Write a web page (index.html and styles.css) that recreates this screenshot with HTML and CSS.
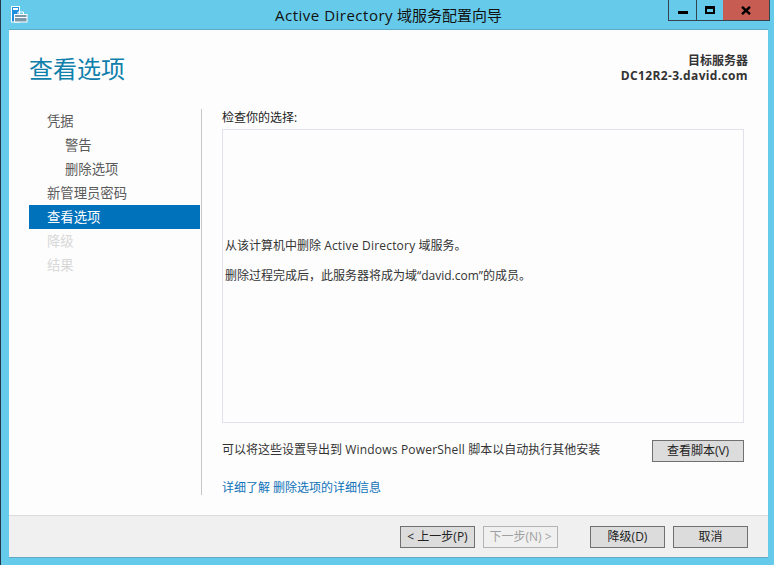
FILE: index.html
```html
<!DOCTYPE html>
<html lang="zh-CN">
<head>
<meta charset="utf-8">
<title>Active Directory 域服务配置向导</title>
<link rel="stylesheet" href="styles.css">
</head>
<body>
<div class="window">
  <header class="titlebar">
    <svg class="app-icon" width="17" height="17" viewBox="0 0 17 17">
      <rect x="0.5" y="0.5" width="8" height="15.5" fill="#1d8fe0" stroke="#fff"/>
      <rect x="2" y="2" width="5" height="2" fill="#fff"/>
      <rect x="3.5" y="8.5" width="12.5" height="7.5" fill="#7b98aa" stroke="#fff"/>
      <path d="M7 8V6h5.5v2" fill="none" stroke="#fff"/>
      <rect x="4" y="11" width="12" height="1" fill="#fff"/>
    </svg>
    <h1 class="window-title"><span class="wide">Active Directory</span> 域服务配置向导</h1>
    <div class="controls">
      <button class="ctl ctl-min" aria-label="最小化"><span class="glyph-min"></span></button>
      <button class="ctl ctl-max" aria-label="最大化"><span class="glyph-max"></span></button>
      <button class="ctl ctl-close" aria-label="关闭"><svg width="10" height="9" viewBox="0 0 10 9"><path d="M1 0.8 9 8.2M9 0.8 1 8.2" stroke="#000" stroke-width="2.4" fill="none"/></svg></button>
    </div>
  </header>
  <div class="client">
    <main class="main">
      <div class="head">
        <h2 class="page-title">查看选项</h2>
        <div class="server">
          <div>目标服务器</div>
          <div class="server-name">DC12R2-3.david.com</div>
        </div>
      </div>
      <div class="body">
        <nav class="nav">
          <div class="nav-item">凭据</div>
          <div class="nav-item sub">警告</div>
          <div class="nav-item sub">删除选项</div>
          <div class="nav-item">新管理员密码</div>
          <div class="nav-item active">查看选项</div>
          <div class="nav-item off">降级</div>
          <div class="nav-item off">结果</div>
        </nav>
        <section class="pane">
          <div class="label">检查你的选择:</div>
          <div class="review">
            <p>从该计算机中删除 <span class="wide">Active Directory</span> 域服务。</p>
            <p>删除过程完成后，此服务器将成为域“david.com”的成员。</p>
          </div>
          <div class="export">
            <span class="export-text">可以将这些设置导出到 <span class="wide">Windows PowerShell</span> 脚本以自动执行其他安装</span>
            <button class="btn btn-script">查看脚本(V)</button>
          </div>
          <a class="link" href="#">详细了解 删除选项的详细信息</a>
        </section>
      </div>
    </main>
    <footer class="footer">
      <button class="btn">&lt; 上一步(P)</button>
      <button class="btn disabled">下一步(N) &gt;</button>
      <button class="btn gap">降级(D)</button>
      <button class="btn">取消</button>
    </footer>
  </div>
</div>
</body>
</html>
```
FILE: styles.css
```css
* { box-sizing: border-box; }
html, body { margin: 0; padding: 0; }
body {
  width: 774px;
  height: 565px;
  overflow: hidden;
  font-family: "Open Sans", "Noto Sans CJK SC", sans-serif;
  font-size: 12px;
  color: #333;
}
button { font: inherit; color: inherit; }
.wide { letter-spacing: 0.2px; }
.window {
  width: 774px;
  height: 565px;
  background: #66cbea;
  border-left: 1px solid #26384a;
  padding: 0 6px 7px 8px;
  display: flex;
  flex-direction: column;
}
.titlebar {
  height: 30px;
  flex: none;
  position: relative;
  display: flex;
  justify-content: center;
  align-items: flex-start;
  border-bottom: 1px solid #5fa9c4;
}
.app-icon { position: absolute; left: 2px; top: 6px; }
.window-title {
  margin: 5px 0 0;
  font-size: 15px;
  font-weight: 400;
  line-height: 20px;
  color: #111;
}
.window-title .wide { letter-spacing: 0.5px; }
.controls {
  position: absolute;
  right: -2px;
  top: 0;
  display: flex;
  height: 21px;
  border: solid #33434f;
  border-width: 0 1px 1px 1px;
}
.ctl {
  height: 20px;
  border: 0;
  padding: 0;
  background: transparent;
  display: flex;
  align-items: center;
  justify-content: center;
}
.ctl-min { width: 28px; border-right: 1px solid #33434f; }
.ctl-max { width: 26px; }
.ctl-close { width: 46px; background: #c75c52; }
.glyph-min { width: 10px; height: 3px; background: #000; margin-top: 5px; }
.glyph-max { width: 10px; height: 8px; border: 2px solid #000; border-top-width: 3px; }
.client {
  flex: 1;
  background: #fdfdfd;
  display: flex;
  flex-direction: column;
  min-height: 0;
}
.main { flex: 1; display: flex; flex-direction: column; min-height: 0; }
.head {
  height: 79px;
  flex: none;
  display: flex;
  justify-content: space-between;
  padding: 20px 20px 0;
}
.page-title {
  margin: 1px 0 0;
  font-size: 24px;
  font-weight: 400;
  line-height: 36px;
  color: #0f80ab;
}
.server {
  text-align: right;
  font-size: 12px;
  font-weight: 600;
  line-height: 15px;
  padding-top: 3px;
  color: #333;
}
.server-name { font-weight: 700; letter-spacing: 0.35px; }
.body {
  flex: 1;
  display: flex;
  height: 386px;
}
.nav {
  width: 193px;
  height: 386px;
  flex: none;
  padding: 0 1px 0 20px;
  border-right: 1px solid #c8c8c8;
}
.nav-item {
  height: 24px;
  line-height: 24px;
  padding-left: 18px;
  font-size: 13.33px;
  color: #5a5a5a;
}
.nav-item.sub { padding-left: 36px; }
.nav-item.active { background: #0072bc; color: #fff; }
.nav-item.off { color: #d8d8d8; }
.pane {
  flex: 1;
  padding: 0 24px 0 20px;
  display: flex;
  flex-direction: column;
}
.label { height: 20px; line-height: 18px; color: #222; }
.review {
  height: 294px;
  border: 1px solid #e2e2ea;
  padding: 107px 2px 0;
  color: #333;
}
.review p { margin: 0 0 12px; line-height: 18px; }
.export {
  display: flex;
  justify-content: space-between;
  align-items: center;
  height: 22px;
  margin-top: 17px;
}
.export-text { margin-top: -4px; }
.link {
  margin-top: 17px;
  line-height: 18px;
  color: #0f72b8;
  text-decoration: none;
}
.footer {
  height: 43px;
  flex: none;
  background: #f0f0f0;
  border-top: 1px solid #dcdcdc;
  border-bottom: 1px solid #5fa9c4;
  padding: 10px 20px 0 0;
  display: flex;
  justify-content: flex-end;
  gap: 8px;
}
.btn {
  width: 75px;
  height: 22px;
  padding: 0;
  background: #dcdcdc;
  border: 1px solid #707070;
  font-size: 12px;
  line-height: 18px;
  color: #222;
  white-space: nowrap;
}
.btn-script { width: 92px; }
.btn.disabled { background: #f0f0f0; border-color: #b4b4b4; color: #a0a0a0; }
.btn.gap { margin-left: 24px; }
```
